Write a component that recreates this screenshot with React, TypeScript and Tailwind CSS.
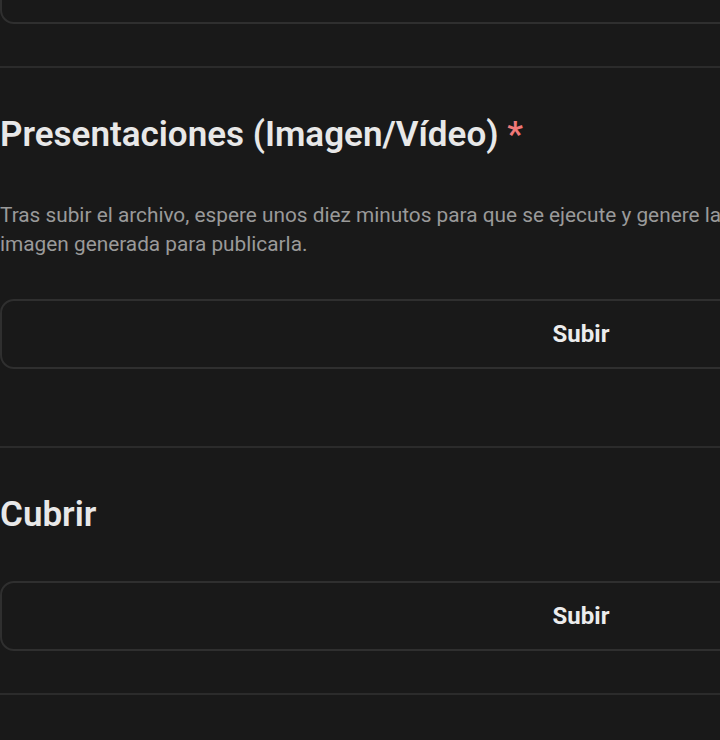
import React from "react";

const UploadButton = ({ className, label = "Subir" }: { className?: string; label?: string }) => (
  <button
    type="button"
    className={`flex h-[70px] w-full items-center justify-center rounded-[14px] border-2 border-[#2f2f2f] bg-[#191919] text-[24px] font-bold text-[#ececec] ${className ?? ""}`}
  >
    {label}
  </button>
);

const Divider = ({ className }: { className?: string }) => (
  <div className={`h-[2px] w-full bg-[#2b2b2b] ${className ?? ""}`} />
);

export default function App() {
  return (
    <div
      className="h-[740px] w-[720px] overflow-hidden bg-[#191919]"
      style={{ fontFamily: "Roboto, 'Noto Sans', sans-serif" }}
    >
      <div className="w-[1162px]">
        {/* previous field, scrolled mostly out of view */}
        <UploadButton className="-mt-[46px]" label="" />
        <Divider className="mt-[42px]" />

        <section className="pt-[44px]">
          <h2 className="text-[35px] font-semibold leading-[46px] text-[#e8e8e8]">
            Presentaciones (Imagen/Vídeo) <span className="text-[#f07878]">*</span>
          </h2>
          <p className="mt-[43px] w-[735px] text-[20.8px] leading-[29px] text-[#9a9a9a]">
            Tras subir el archivo, espere unos diez minutos para que se ejecute y genere la
            imagen generada para publicarla.
          </p>
          <UploadButton className="mt-[40px]" />
        </section>
        <Divider className="mt-[77px]" />

        <section className="pt-[44px]">
          <h2 className="text-[35px] font-semibold leading-[46px] text-[#e8e8e8]">Cubrir</h2>
          <UploadButton className="mt-[43px]" />
        </section>
        <Divider className="mt-[42px]" />
      </div>
    </div>
  );
}
